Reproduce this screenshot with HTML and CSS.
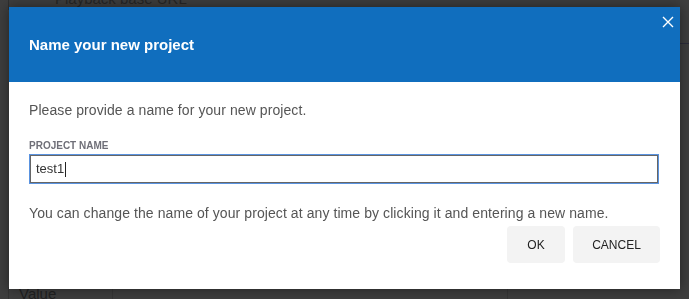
FILE: index.html
```html
<!doctype html>
<html>
<head>
    <title>Name your new project</title>
    <link rel="stylesheet" href="styles.css">
</head>
<body>
    <div class="page">
        <div class="field-row">
            <span class="field-label">Playback base URL</span>
        </div>
        <div class="side-panel"></div>
        <div class="table-row">
            <span class="cell">Value</span>
            <span class="cell wide"></span>
        </div>
    </div>

    <div class="modal">
        <div class="modal-header">
            <h1>Name your new project</h1>
            <button class="close" aria-label="Close">
                <svg width="12" height="12" viewBox="0 0 12 12">
                    <path d="M1 1 L11 11 M11 1 L1 11" stroke="#fff" stroke-width="1.4" fill="none"/>
                </svg>
            </button>
        </div>
        <div class="modal-body">
            <p class="intro">Please provide a name for your new project.</p>
            <label class="label">PROJECT NAME</label>
            <div class="text-input">test1<span class="caret"></span></div>
            <p class="hint">You can change the name of your project at any time by clicking it and entering a new name.</p>
            <div class="actions">
                <button class="btn ok">OK</button>
                <button class="btn cancel">CANCEL</button>
            </div>
        </div>
    </div>
</body>
</html>
```

FILE: styles.css
```css
body {
    margin: 0;
    font-family: "Liberation Sans", Arial, sans-serif;
    background-color: #3e3e3e;
    height: 299px;
    overflow: hidden;
}
.page {
    height: 299px;
    display: flex;
    flex-direction: column;
    justify-content: space-between;
    position: relative;
}
.field-row {
    height: 10px;
    margin-left: 8px;
    border-left: 1px solid #2f2f2f;
    padding-left: 46px;
    overflow: hidden;
}
.field-label {
    display: block;
    margin-top: -10px;
    font-size: 15px;
    line-height: 18px;
    color: #262626;
}
.side-panel {
    flex: 1;
    margin-left: 680px;
    border-top: 1px solid #2c2c3a;
    margin-top: 33px;
}
.table-row {
    display: flex;
    height: 12px;
    margin-left: 8px;
    border-left: 1px solid #333;
}
.cell {
    width: 93px;
    padding-left: 10px;
    font-size: 15px;
    line-height: 14px;
    color: #222;
    border-right: 1px solid #363636;
}
.cell.wide {
    width: 394px;
    padding: 0;
}

.modal {
    position: fixed;
    top: 7px;
    left: 9px;
    width: 671px;
    height: 282px;
    background-color: white;
    box-shadow: 0 0 12px rgba(0,0,0,0.45);
}
.modal-header {
    height: 75px;
    background-color: #106ebe;
    display: flex;
    align-items: center;
    padding-left: 20px;
}
.modal-header h1 {
    margin: 0;
    font-size: 15px;
    font-weight: bold;
    color: white;
}
.close {
    position: absolute;
    top: 8px;
    right: 5px;
    width: 14px;
    height: 14px;
    padding: 1px;
    border: none;
    background: none;
    cursor: pointer;
}
.modal-body {
    padding: 18px 20px 0;
}
.intro, .hint {
    margin: 0;
    font-size: 14px;
    line-height: 20px;
    letter-spacing: 0.08px;
    color: #555;
}
.label {
    display: block;
    margin-top: 21px;
    font-size: 10px;
    font-weight: bold;
    line-height: 10px;
    color: #6f6f78;
}
.text-input {
    margin-top: 4px;
    height: 28px;
    box-sizing: border-box;
    width: 628px;
    margin-left: 1px;
    border: 1px solid #666;
    outline: 1px solid #5a93e0;
    padding-left: 5px;
    font-size: 13px;
    line-height: 26px;
    color: #333;
    display: flex;
    align-items: center;
}
.caret {
    display: inline-block;
    width: 1px;
    height: 15px;
    margin-left: 1px;
    background-color: #222;
}
.hint {
    margin-top: 20px;
}
.actions {
    display: flex;
    justify-content: flex-end;
    gap: 8px;
    margin-top: 3px;
}
.btn {
    height: 37px;
    border: none;
    border-radius: 4px;
    background-color: #f3f3f3;
    font-family: "Liberation Sans", Arial, sans-serif;
    font-size: 12px;
    color: #222;
    cursor: pointer;
}
.btn.ok {
    width: 58px;
}
.btn.cancel {
    width: 87px;
}
```
